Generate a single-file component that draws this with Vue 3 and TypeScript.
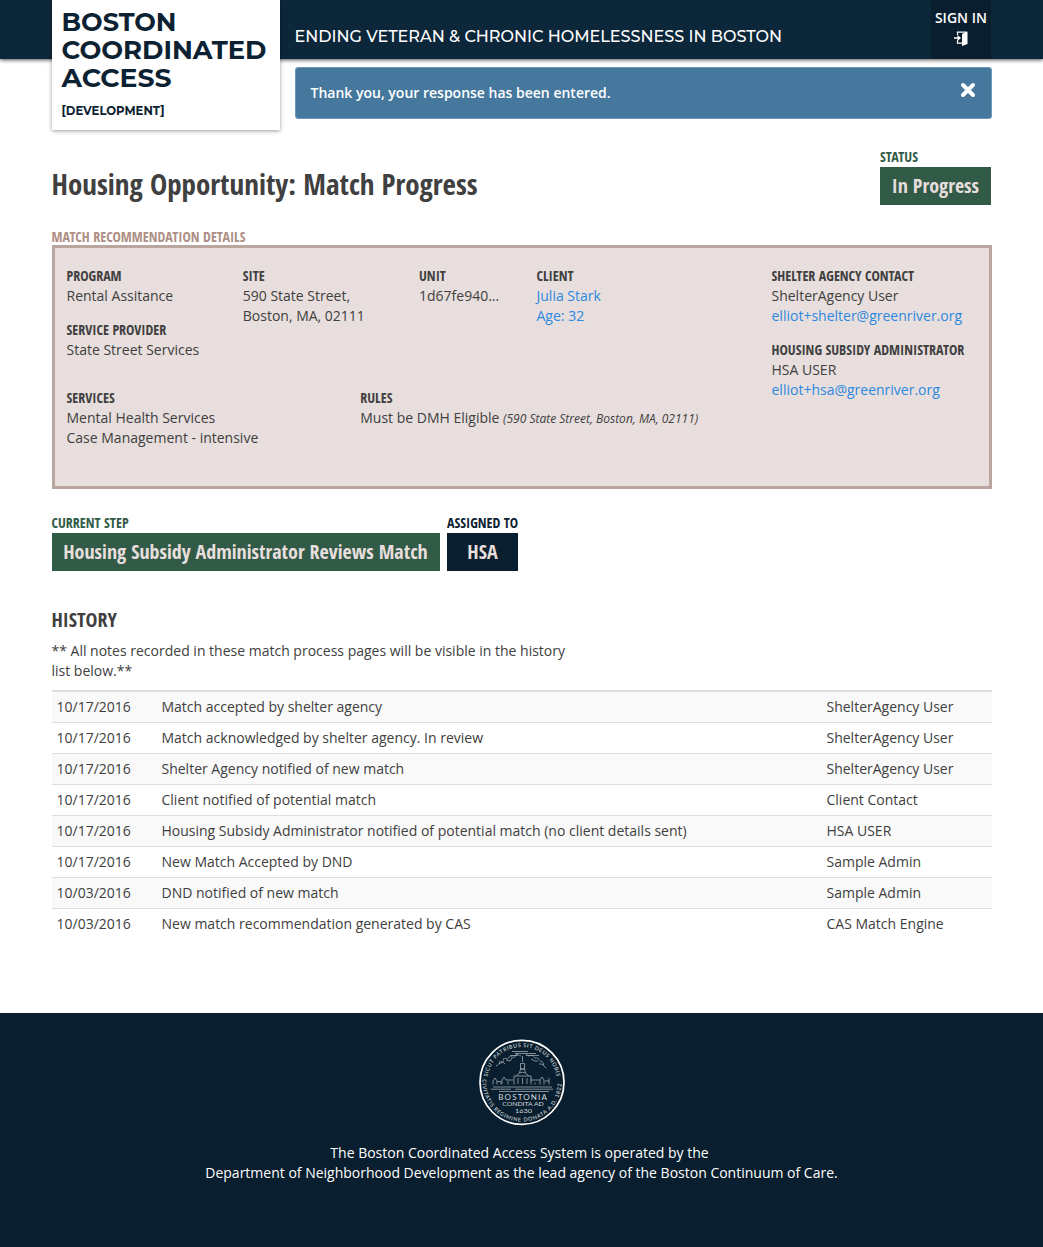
<script setup lang="ts">
interface HistoryRow {
  date: string
  event: string
  contact: string
}

const history: HistoryRow[] = [
  { date: '10/17/2016', event: 'Match accepted by shelter agency', contact: 'ShelterAgency User' },
  { date: '10/17/2016', event: 'Match acknowledged by shelter agency. In review', contact: 'ShelterAgency User' },
  { date: '10/17/2016', event: 'Shelter Agency notified of new match', contact: 'ShelterAgency User' },
  { date: '10/17/2016', event: 'Client notified of potential match', contact: 'Client Contact' },
  { date: '10/17/2016', event: 'Housing Subsidy Administrator notified of potential match (no client details sent)', contact: 'HSA USER' },
  { date: '10/17/2016', event: 'New Match Accepted by DND', contact: 'Sample Admin' },
  { date: '10/03/2016', event: 'DND notified of new match', contact: 'Sample Admin' },
  { date: '10/03/2016', event: 'New match recommendation generated by CAS', contact: 'CAS Match Engine' },
]
</script>

<template>
  <div class="page">
    <header class="top">
      <div class="container top-row">
        <div class="brand">
          <svg class="brand-name" width="208" height="84">
            <text x="-.5" y="22" textLength="115" lengthAdjust="spacingAndGlyphs">BOSTON</text>
            <text x="-.5" y="50" textLength="205" lengthAdjust="spacingAndGlyphs">COORDINATED</text>
            <text x="-.5" y="78" textLength="110" lengthAdjust="spacingAndGlyphs">ACCESS</text>
          </svg>
          <svg class="brand-env" width="120" height="20">
            <text x="-.5" y="14" textLength="103" lengthAdjust="spacingAndGlyphs">[DEVELOPMENT]</text>
          </svg>
        </div>
        <svg class="tagline" width="500" height="59">
          <text x="-.5" y="42" textLength="487.500" lengthAdjust="spacingAndGlyphs">ENDING VETERAN &amp; CHRONIC HOMELESSNESS IN BOSTON</text>
        </svg>
        <a class="signin">
          <span>SIGN IN</span>
          <svg width="14" height="15" viewBox="0 0 14 15">
            <path d="M3.500 4V1.200H12V12.500H8M3.500 9V12.200H8" fill="none" stroke="#fff" stroke-width="1.200" />
            <path d="M8 3L13.500 .6V13L8 15Z" fill="#fff" />
            <path d="M0 6.200H3.500V4L7 7L3.500 10V7.800H0Z" fill="#fff" />
          </svg>
        </a>
      </div>
    </header>

    <div class="container alert-row">
      <div class="alert">
        <span>Thank you, your response has been entered.</span>
        <svg class="close" width="16" height="16" viewBox="0 0 16 16">
          <path d="M3 3L13 13M13 3L3 13" stroke="#fff" stroke-width="4" stroke-linecap="round" />
        </svg>
      </div>
    </div>

    <main class="container">
      <div class="heading">
        <h1>Housing Opportunity: Match Progress</h1>
        <div class="status">
          <div class="cond green">STATUS</div>
          <div class="chip">In Progress</div>
        </div>
      </div>

      <div class="cond rose">MATCH RECOMMENDATION DETAILS</div>
      <section class="panel">
        <div class="left">
          <div class="cols">
            <div class="c3">
              <dl><dt>PROGRAM</dt><dd>Rental Assitance</dd></dl>
              <dl><dt>SERVICE PROVIDER</dt><dd>State Street Services</dd></dl>
            </div>
            <div class="c3"><dl><dt>SITE</dt><dd>590 State Street,<br>Boston, MA, 02111</dd></dl></div>
            <div class="c2"><dl><dt>UNIT</dt><dd>1d67fe940...</dd></dl></div>
            <div class="c4"><dl><dt>CLIENT</dt><dd><a>Julia Stark<br>Age: 32</a></dd></dl></div>
          </div>
          <div class="cols">
            <div class="c5"><dl><dt>SERVICES</dt><dd>Mental Health Services<br>Case Management - intensive</dd></dl></div>
            <div class="c7"><dl><dt>RULES</dt><dd>Must be DMH Eligible <em>(590 State Street, Boston, MA, 02111)</em></dd></dl></div>
          </div>
        </div>
        <div class="right">
          <dl><dt>SHELTER AGENCY CONTACT</dt><dd>ShelterAgency User<br><a>elliot+shelter@greenriver.org</a></dd></dl>
          <dl><dt>HOUSING SUBSIDY ADMINISTRATOR</dt><dd>HSA USER<br><a>elliot+hsa@greenriver.org</a></dd></dl>
        </div>
      </section>

      <div class="steps">
        <div class="step">
          <div class="cond green">CURRENT STEP</div>
          <div class="chip">Housing Subsidy Administrator Reviews Match</div>
        </div>
        <div class="assigned">
          <div class="cond navy">ASSIGNED TO</div>
          <div class="chip dark">HSA</div>
        </div>
      </div>

      <h2>HISTORY</h2>
      <p class="note">** All notes recorded in these match process pages will be visible in the history<br>list below.**</p>
      <table>
        <tbody>
          <tr v-for="(row, i) in history" :key="i">
            <td class="date">{{ row.date }}</td>
            <td>{{ row.event }}</td>
            <td class="who">{{ row.contact }}</td>
          </tr>
        </tbody>
      </table>
    </main>

    <footer>
      <svg class="seal" width="86" height="87" viewBox="0 0 86 87">
        <defs>
          <path id="seal-top" d="M8.430 37.830A35 35 0 0 1 77.740 38.400" />
          <path id="seal-bottom" d="M3.600 40.300A39.500 39.500 0 1 0 82.500 43.300" />
        </defs>
        <circle cx="43" cy="43.300" r="42" fill="none" stroke="#fff" stroke-width="1.700" />
        <g class="ring">
          <text textLength="99" lengthAdjust="spacing"><textPath href="#seal-top" textLength="99" lengthAdjust="spacing">SICUT PATRIBUS SIT DEUS NOBIS</textPath></text>
          <text textLength="125" lengthAdjust="spacing"><textPath href="#seal-bottom" textLength="125" lengthAdjust="spacing">CIVITATIS REGIMINE DONATA A.D. 1822</textPath></text>
        </g>
        <g fill="none" stroke="#b5bdc4" stroke-width=".7">
          <path d="M33 12.500H49M36 14.500H57M31 16.500H39M47 16.500H60" />
          <path d="M17 27l3-2 1-3 3 1 1-4 4 1 2-3 4 2 2-4 5 2M46 14l3 3 4-1 3 3 3 0 2 3 3 1 1 4 3 3" stroke-dasharray="3 .8" />
          <path d="M20 25l4-2 2 2M27 21l4 1 2-3M52 20l4 2 3 0M60 25l3 0 2 2" />
          <path d="M43.500 17V23M41.500 24.500H45.500V30H41.500ZM40.500 34L41.500 30H45.500L46.500 34M37.500 36.500Q43.500 30 49.500 36.500M35 45.500V37H52V45.500M39 39V45M43.500 39V45M48 39V45" />
          <path d="M14 45.500V42l2-3 2 3v3.500M18 42.500H22V45.500M23 45V41l2-3 2 3H34M29 45.500V42M54 41H61V45.500M61 41l2-3 2 3v4.500M66 42H70M70 45.500V39M56 43.500V45.500M51 41H54" />
          <path d="M14 48H73M12 50.200H32M36 50.200H74M20 52.500H70" />
        </g>
        <g class="motto">
          <text x="19.300" y="60.500" font-size="8" textLength="48.500" lengthAdjust="spacing">BOSTONIA</text>
          <text x="23.300" y="66.900" font-size="5.300" textLength="41.500" lengthAdjust="spacingAndGlyphs">CONDITA AD</text>
          <text x="36" y="74.200" font-size="6.300" textLength="17" lengthAdjust="spacingAndGlyphs">1630</text>
        </g>
      </svg>
      <p><span class="line1">The Boston Coordinated Access System is operated by the</span><br>Department of Neighborhood Development as the lead agency of the Boston Continuum of Care.</p>
    </footer>
  </div>
</template>

<style>
body { margin: 0; background: #fff; }
</style>

<style scoped>
.page { font: 14px/20px "Open Sans", sans-serif; color: #404040; min-height: 1247px; display: flex; flex-direction: column; }
.container { width: 940px; margin: 0 auto; }
.top { height: 59px; background: #0c273a; box-shadow: 0 1px 4px rgba(0, 0, 0, .7); }
.top-row { display: flex; align-items: flex-start; height: 59px; }
.brand { width: 228px; height: 130px; box-sizing: border-box; padding: 9px 0 0 10px; background: #fff; box-shadow: 0 1px 4px rgba(0, 0, 0, .4); position: relative; z-index: 1; }
.brand svg { display: block; }
.brand-name { font: 700 26px "Montserrat", "Inter", sans-serif; fill: #0c2233; overflow: visible; }
.brand-env { font: 700 12px "Montserrat", "Inter", sans-serif; fill: #0c2233; margin-top: 8px; overflow: visible; }
.tagline { margin-left: 15px; font: 500 16.500px "Montserrat", "Inter", sans-serif; fill: #fff; overflow: visible; }
.signin { margin-left: auto; margin-right: .6px; width: 60px; height: 59px; background: #091e2e; color: #fff; font-weight: 600; display: flex; flex-direction: column; align-items: center; padding-top: 8px; box-sizing: border-box; }
.signin svg { margin-top: 3px; }
.alert-row { display: flex; }
.alert { margin: 8px 0 0 243.500px; width: 697px; height: 52px; box-sizing: border-box; border: 1px solid #6d97bb; border-radius: 3px; background: #46789e; color: #fff; font-weight: 600; padding: 15px 15px 0 14.500px; display: flex; justify-content: space-between; align-items: flex-start; }
.close { margin-top: -1px; }
.cond, dt, h1, h2, .chip { font-family: "Open Sans Condensed", "Open Sans", sans-serif; font-stretch: 75%; font-weight: 700; margin: 0; }
.heading { display: flex; justify-content: space-between; align-items: flex-start; height: 108px; box-sizing: border-box; }
main { padding-top: 28px; }
h1 { font-size: 29px; line-height: 36px; margin-top: 19px; }
.cond { font-size: 14px; line-height: 20px; white-space: nowrap; }
.green { color: #315a47; }
.rose { color: #ae8e85; margin-top: -28px; height: 18px; }
.navy { color: #0c2233; }
.status { width: 111px; margin-right: .6px; }
.chip { background: #315a47; color: #e7dedd; font-size: 20px; line-height: 38px; height: 38px; text-align: center; white-space: nowrap; }
.dark { background: #091e2e; }
.panel { display: flex; height: 244px; box-sizing: border-box; border: 3px solid #bba69f; background: #e7dedd; padding: 18px 0 0 12px; }
.left { width: 705px; }
.cols { display: flex; }
.cols:first-child { height: 122px; }
.c2 { width: 117.500px; }
.c3 { width: 176.250px; }
.c4 { width: 235px; }
.c5 { width: 293.750px; }
.c7 { width: 411.250px; }
dl { margin: 0 0 14px; white-space: nowrap; }
dd { margin: 0; }
a { color: #2c89df; }
.signin { color: #fff; }
em { font-size: 12px; }
.steps { display: flex; gap: 7.500px; margin-top: 24px; }
.step { width: 388px; }
.assigned { width: 71px; }
h2 { font-size: 20px; line-height: 28px; margin-top: 35px; }
.note { margin: 7px 0 9px; }
table { width: 940px; border-collapse: separate; border-spacing: 0; border-top: 1px solid #ddd; }
td { height: 30px; padding: 0 5px; border-top: 1px solid #ddd; }
tr:nth-child(odd) td { background: #f9f9f9; }
.date { width: 95px; }
.who { width: 160px; }
footer { margin-top: auto; height: 234px; background: #091e2e; color: #fff; text-align: center; }
.seal { display: block; margin: 26px auto 0; overflow: visible; }
.ring { font: 5.300px "Lato", sans-serif; fill: #e2e6e8; }
.motto { font-family: "Lato", sans-serif; fill: #d5dadd; }
footer p { margin: 17px 0 0; }
.line1 { margin-right: 4px; }
</style>
